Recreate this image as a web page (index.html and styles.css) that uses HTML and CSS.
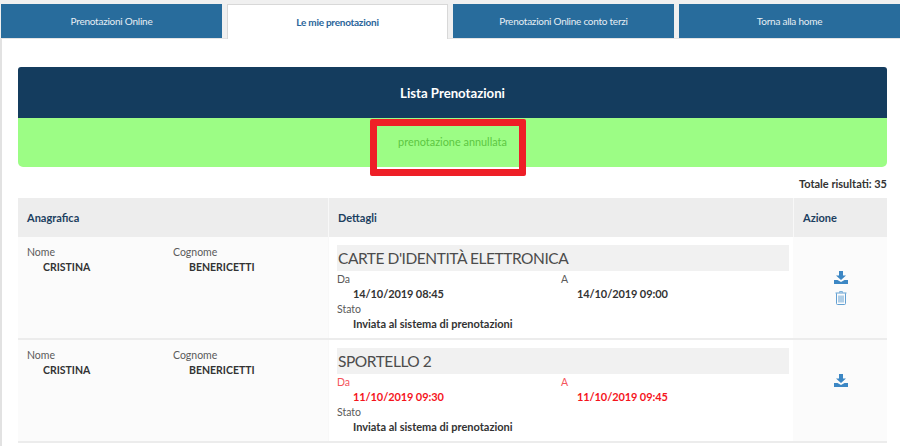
FILE: index.html
```html
<!DOCTYPE html>
<html lang="it">
<head>
<meta charset="utf-8">
<title>Le mie prenotazioni</title>
<link rel="stylesheet" href="styles.css">
</head>
<body>
<nav class="tabs">
  <a class="tab">Prenotazioni Online</a>
  <a class="tab active">Le mie prenotazioni</a>
  <a class="tab">Prenotazioni Online conto terzi</a>
  <a class="tab">Torna alla home</a>
</nav>
<main class="content">
  <section class="panel">
    <h1 class="panel-title">Lista Prenotazioni</h1>
    <div class="notice">
      <p class="notice-text">prenotazione annullata</p>
      <div class="highlight"></div>
    </div>
  </section>
  <p class="total">Totale risultati: 35</p>
  <div class="table">
    <div class="row head">
      <div class="cell c1">Anagrafica</div>
      <div class="cell c2">Dettagli</div>
      <div class="cell c3">Azione</div>
    </div>
    <div class="row">
      <div class="cell c1 people">
        <div class="pair"><span class="lab">Nome</span><b class="val">CRISTINA</b></div>
        <div class="pair"><span class="lab">Cognome</span><b class="val">BENERICETTI</b></div>
      </div>
      <div class="cell c2 details">
        <h2 class="service">CARTE D'IDENTITÀ ELETTRONICA</h2>
        <div class="dates">
          <div class="pair"><span class="lab">Da</span><b class="val">14/10/2019 08:45</b></div>
          <div class="pair"><span class="lab">A</span><b class="val">14/10/2019 09:00</b></div>
        </div>
        <div class="pair"><span class="lab">Stato</span><b class="val">Inviata al sistema di prenotazioni</b></div>
      </div>
      <div class="cell c3 actions">
        <svg class="ico" viewBox="0 0 14 13"><path class="dl" d="M5 0h4v4.500h3L7 9 2 4.500h3zM0 9h3.500L7 11l3.500-2H14v4H0z"/></svg>
        <svg class="ico bin" viewBox="0 0 12 14"><path class="tr" d="M4.500 1.500V.7h3v.8M.5 2h11M1.500 2.300v10.200q0 1 1 1h7q1 0 1-1V2.300M4 4.500v7M6 4.500v7M8 4.500v7"/></svg>
      </div>
    </div>
    <div class="row">
      <div class="cell c1 people">
        <div class="pair"><span class="lab">Nome</span><b class="val">CRISTINA</b></div>
        <div class="pair"><span class="lab">Cognome</span><b class="val">BENERICETTI</b></div>
      </div>
      <div class="cell c2 details">
        <h2 class="service">SPORTELLO 2</h2>
        <div class="dates late">
          <div class="pair"><span class="lab">Da</span><b class="val">11/10/2019 09:30</b></div>
          <div class="pair"><span class="lab">A</span><b class="val">11/10/2019 09:45</b></div>
        </div>
        <div class="pair"><span class="lab">Stato</span><b class="val">Inviata al sistema di prenotazioni</b></div>
      </div>
      <div class="cell c3 actions">
        <svg class="ico" viewBox="0 0 14 13"><path class="dl" d="M5 0h4v4.500h3L7 9 2 4.500h3zM0 9h3.500L7 11l3.500-2H14v4H0z"/></svg>
      </div>
    </div>
  </div>
</main>
</body>
</html>
```
FILE: styles.css
```css
* { box-sizing: border-box; }
html, body { margin: 0; height: 446px; overflow: hidden; }
body {
  background: #fff;
  font-family: Lato, "Liberation Sans", sans-serif;
  font-size: 11px;
  color: #555;
}
.tabs {
  display: flex;
  gap: 5px;
  height: 39px;
  padding: 4px 0 0 1px;
  background: #f0f0f0;
  border-bottom: 1px solid #e4e4e4;
}
.tab {
  flex: 0 0 221px;
  display: flex;
  align-items: center;
  justify-content: center;
  background: #286c9c;
  color: #e6eef4;
  font-size: 10px;
  letter-spacing: -0.25px;
}
.active {
  background: #fff;
  color: #2a659a;
  font-weight: 700;
  border: 1px solid #d8d8d8;
  border-bottom: 0;
  margin-bottom: -1px;
}
.content {
  height: 407px;
  padding: 28px 13px 0 16px;
  border-left: 2px solid #e2e2e2;
}
.panel { position: relative; }
.panel-title {
  margin: 0;
  height: 51px;
  line-height: 52px;
  text-align: center;
  background: #143c5e;
  color: #fff;
  font-size: 13.200px;
  font-weight: 700;
  border-radius: 3px 3px 0 0;
}
.notice {
  position: relative;
  height: 49px;
  background: #9cfd85;
  border-radius: 0 0 5px 5px;
  text-align: center;
}
.notice-text {
  margin: 0;
  padding-top: 17px;
  line-height: 14px;
  color: #5cc742;
  font-size: 10.900px;
}
.highlight {
  position: absolute;
  left: 352px;
  top: 1px;
  width: 156px;
  height: 57px;
  border: 7px solid #ee1f27;
  border-radius: 2px;
}
.total {
  margin: 0;
  height: 31px;
  padding-top: 10px;
  line-height: 13px;
  text-align: right;
  color: #333;
  font-size: 11px;
  font-weight: 700;
}
.row {
  display: flex;
  height: 103px;
  background: #fbfbfb;
  border-bottom: 2px solid #ececec;
}
.head {
  height: 39px;
  background: #ededed;
  border-bottom: 0;
  color: #1c4060;
  font-size: 11px;
  font-weight: 700;
}
.cell { padding: 0 9px; }
.head .cell { display: flex; align-items: center; }
.c1 { width: 310px; }
.c2 { width: 465px; padding-right: 4px; }
.c3 { width: 94px; }
.head .c2, .head .c3 { border-left: 1px solid #f8f8f8; }
.details { background: #fff; border-left: 1px solid #f8f8f8; padding: 8px 4px 0 8px; }
.c1.people { display: flex; padding-top: 8px; }
.people .pair { width: 147px; }
.lab { display: block; line-height: 14px; font-size: 10.500px; color: #5a5a5a; }
.val {
  display: block;
  padding-left: 16px;
  line-height: 16px;
  color: #333;
  font-size: 10.500px;
  font-weight: 700;
}
.service {
  margin: 0;
  height: 26px;
  line-height: 26px;
  padding-left: 1px;
  background: #f1f1f1;
  color: #4c4c4c;
  font-size: 15.500px;
  letter-spacing: -0.45px;
  font-weight: 400;
}
.dates { display: flex; }
.dates .pair { width: 224px; }
.late .val { color: #f5141c; }
.late .lab { color: #f5555c; }
.details .lab { line-height: 15px; padding-top: 1px; height: 15px; }
.details .val { height: 15px; line-height: 15px; font-size: 11px; }
.dates .val { letter-spacing: -0.1px; }
.actions {
  display: flex;
  flex-direction: column;
  align-items: center;
  gap: 7px;
  padding-top: 34px;
  padding-left: 11px;
}
.ico { width: 14px; height: 13px; display: block; }
.bin { width: 12px; height: 14px; }
.dl { fill: #3c87c4; }
.tr { fill: none; stroke: #62a0d2; stroke-width: 1; }
```
